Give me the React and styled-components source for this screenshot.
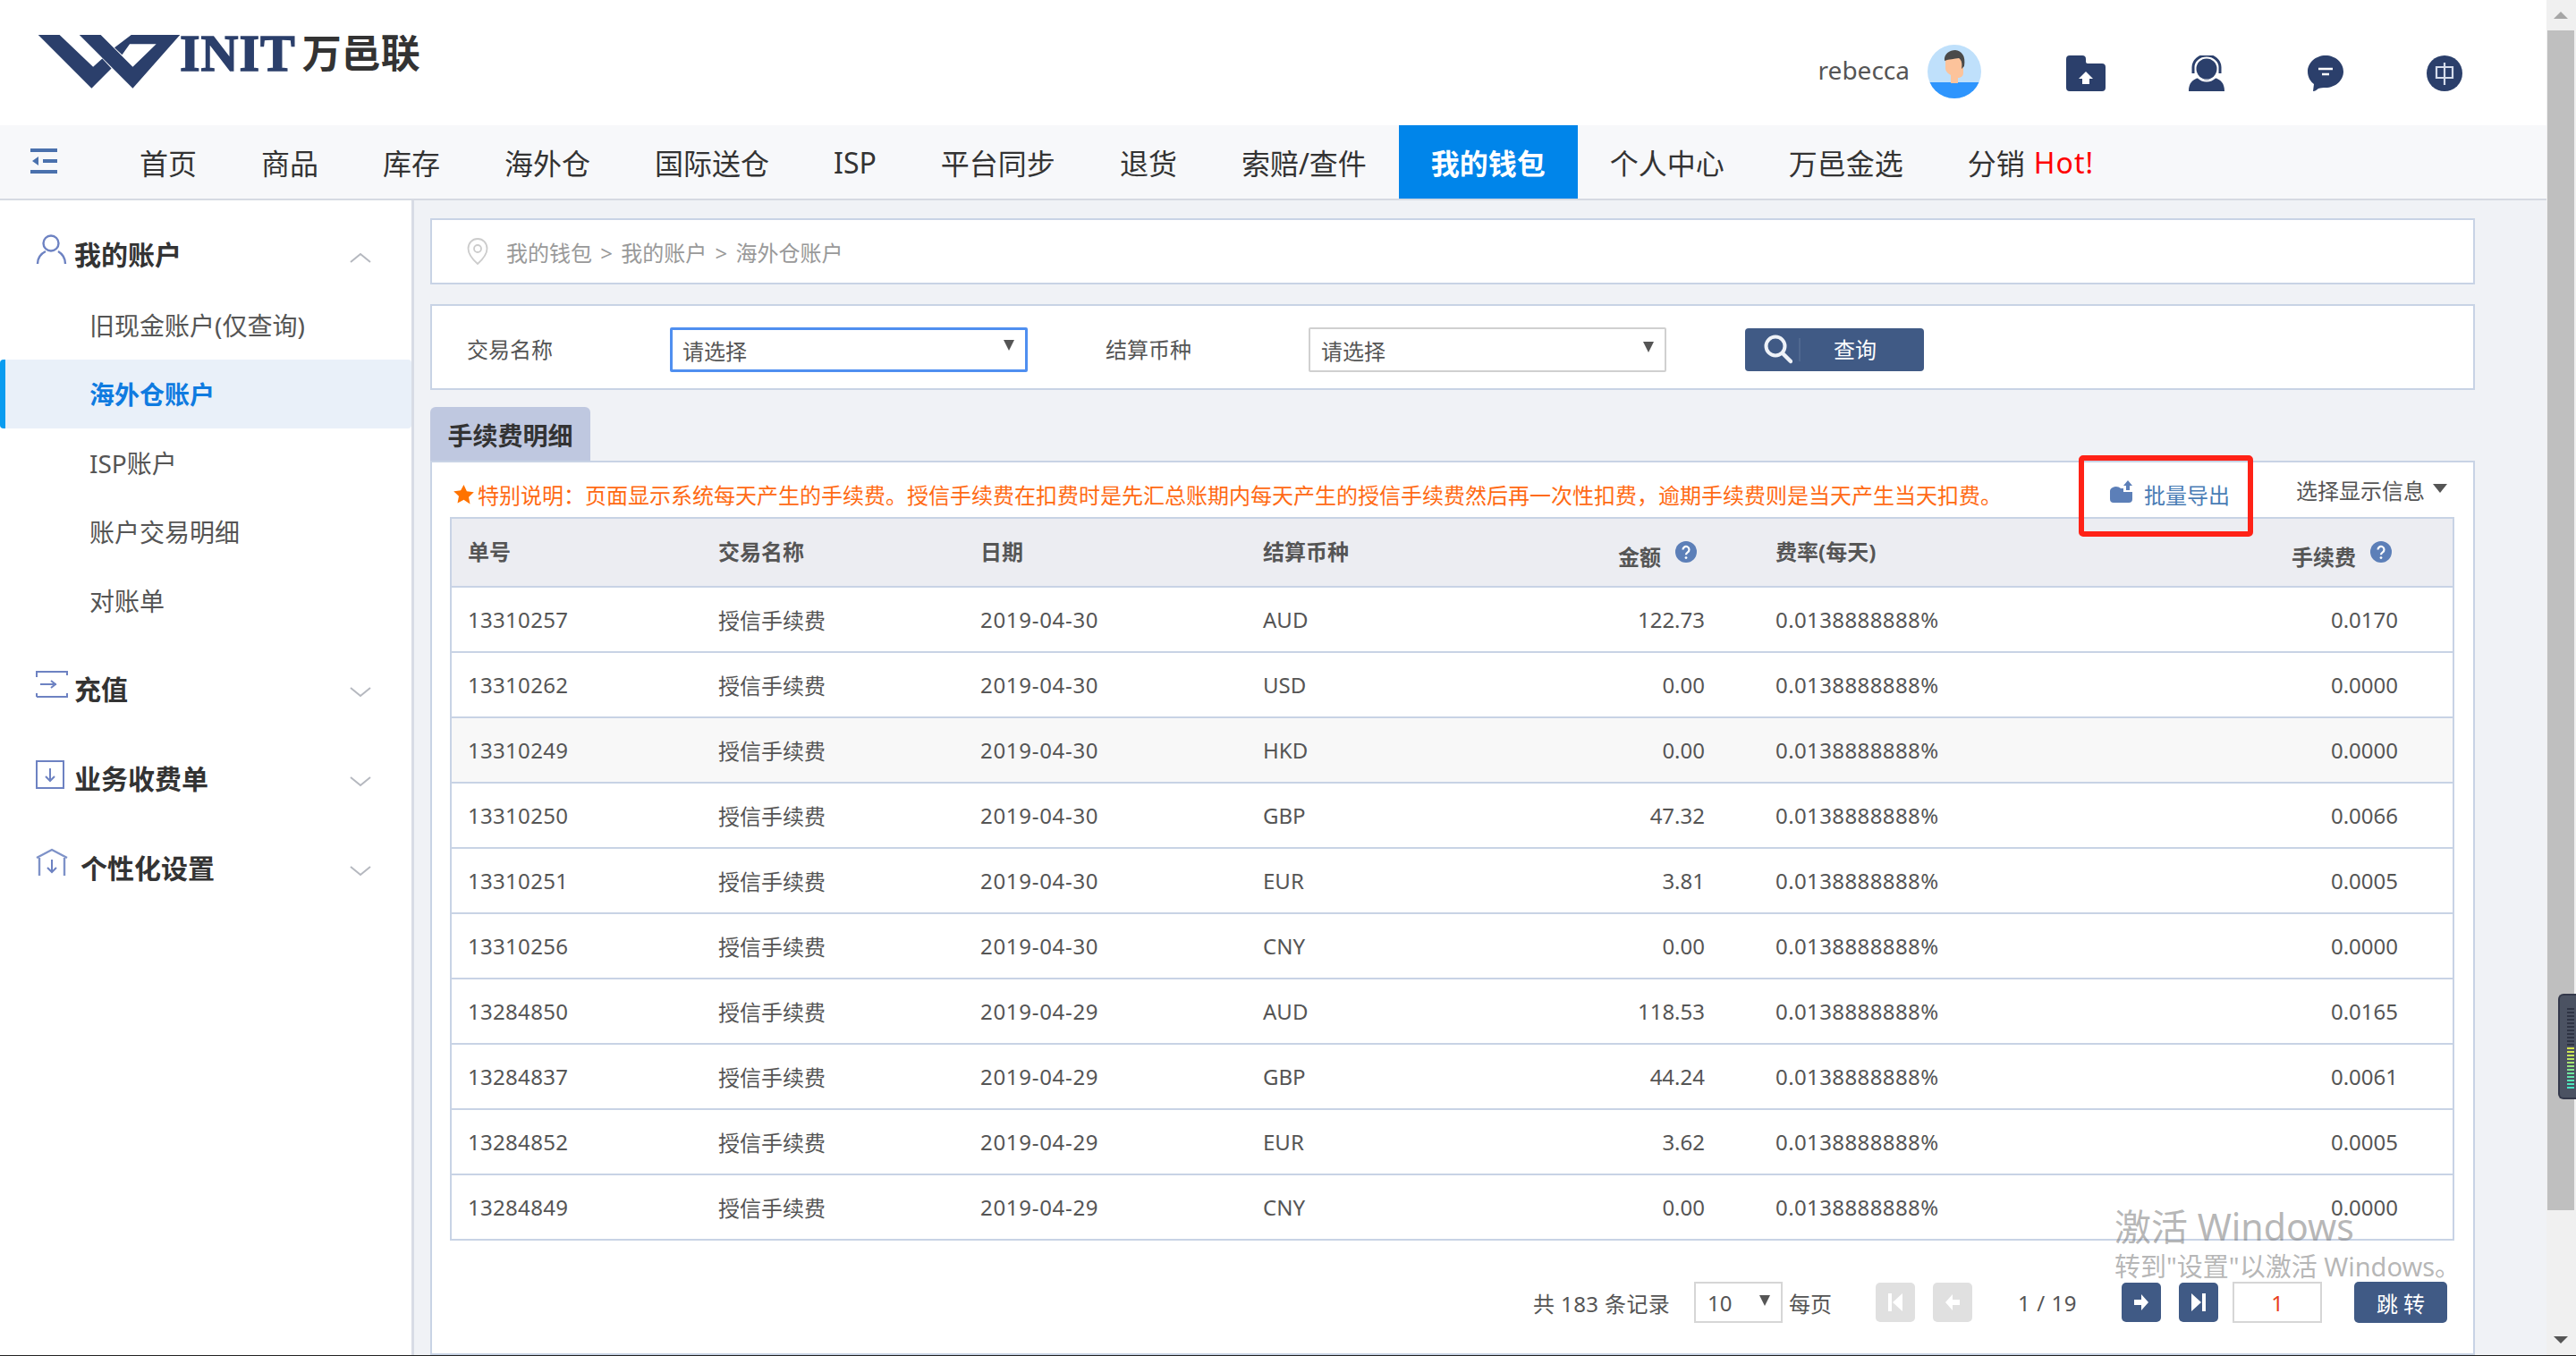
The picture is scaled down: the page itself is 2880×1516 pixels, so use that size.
import styled, { createGlobalStyle } from "styled-components";

const GlobalStyle = createGlobalStyle`
  * {
    box-sizing: border-box;
  }
  html, body {
    margin: 0;
    padding: 0;
    overflow: hidden;
    background: #fff;
    font-family: "Noto Sans", "Noto Sans CJK SC", sans-serif;
    color: #555;
  }
`;

const navy = "#2b3f6b";
const line = "#c8d3e5";

const Shell = styled.div`
  position: relative;
  display: flex;
  width: 2880px;
  height: 1516px;
  overflow: hidden;
  border-bottom: 1px solid #222;
`;

const Page = styled.div`
  flex: 1;
  min-width: 0;
  display: flex;
  flex-direction: column;
`;

/* header */
const Header = styled.header`
  height: 140px;
  display: flex;
  align-items: center;
  justify-content: space-between;
  padding: 0 94px 0 42px;
  background: #fff;
`;

const Logo = styled.div`
  display: flex;
  align-items: flex-start;
  height: 60px;
  margin-top: -2px;
`;

const LogoLatin = styled.span`
  font-family: "Liberation Serif", serif;
  font-weight: 700;
  font-size: 58px;
  line-height: 42px;
  letter-spacing: 1px;
  color: ${navy};
  -webkit-text-stroke: 1.4px ${navy};
  margin-left: -1px;
`;

const LogoCjk = styled.span`
  font-family: "Noto Sans CJK SC", sans-serif;
  font-weight: 700;
  font-size: 44px;
  line-height: 36px;
  color: #333;
  margin-left: 7px;
`;

const UserArea = styled.div`
  display: flex;
  align-items: center;
`;

const UserName = styled.span`
  font-size: 28px;
  color: #555;
  margin-right: 20px;
  margin-top: 16px;
`;

const Avatar = styled.svg`
  width: 60px;
  height: 60px;
  margin-top: 20px;
  margin-right: 95px;
`;

const TopIcons = styled.div`
  display: flex;
  align-items: center;
  gap: 93px;
  margin-top: 24px;
`;

const TopIcon = styled.svg`
  display: block;
  height: 40px;
  width: ${({ $w }) => $w || 40}px;
`;

/* nav */
const Nav = styled.nav`
  height: 84px;
  display: flex;
  padding-left: 34px;
  background: #f7f8fa;
  border-bottom: 2px solid #d6dae2;
`;

const MenuToggle = styled.svg`
  width: 30px;
  height: 28px;
  margin: 26px 56px 0 0;
`;

const NavItem = styled.a`
  height: 82px;
  padding: 0 36px;
  display: flex;
  align-items: center;
  font-size: 32px;
  white-space: nowrap;
  color: ${({ $active }) => ($active ? "#fff" : "#333")};
  background: ${({ $active }) => ($active ? "#0085ea" : "transparent")};
  font-weight: ${({ $active }) => ($active ? 700 : 400)};
`;

const Hot = styled.span`
  color: #f00;
  margin-left: 10px;
  letter-spacing: 1px;
`;

/* body */
const Body = styled.div`
  flex: 1;
  display: flex;
  min-height: 0;
`;

const Sidebar = styled.aside`
  width: 463px;
  flex-shrink: 0;
  padding-top: 11px;
  background: #fff;
  border-right: 3px solid #d8dce5;
`;

const SideHead = styled.div`
  height: 100px;
  display: flex;
  align-items: center;
  padding: 0 43px 4px 40px;
  font-size: 30px;
  font-weight: 700;
  color: #333;
`;

const SideIcon = styled.svg`
  width: 36px;
  height: 36px;
  flex-shrink: 0;
  margin-right: ${({ $gap }) => $gap || 7}px;
  margin-top: -8px;
`;

const SideLabel = styled.span`
  flex: 1;
`;

const Chevron = styled.svg`
  width: 24px;
  height: 14px;
  margin-top: 10px;
  margin-right: 2px;
`;

const SubList = styled.div`
  margin: -10px 0 11px;
`;

const SubItem = styled.div`
  height: 77px;
  display: flex;
  align-items: center;
  padding-bottom: 2px;
  font-size: 28px;
  color: ${({ $active }) => ($active ? "#0f7be0" : "#555")};
  font-weight: ${({ $active }) => ($active ? 700 : 400)};
  background: ${({ $active }) => ($active ? "#e9f0f9" : "transparent")};
  border-left: ${({ $active }) => ($active ? "6px solid #0a9cf0" : "0")};
  padding-left: ${({ $active }) => ($active ? 94 : 100)}px;
  border-radius: ${({ $active }) => ($active ? "4px" : "0")};
`;

const Main = styled.main`
  flex: 1;
  min-width: 0;
  padding: 20px 80px 0 18px;
  background: #f0f2f6;
`;

const Crumbs = styled.div`
  height: 74px;
  display: flex;
  align-items: center;
  padding-left: 39px;
  background: #fff;
  border: 2px solid ${line};
  font-size: 24px;
  word-spacing: 3px;
  color: #999;
`;

const PinIcon = styled.svg`
  width: 24px;
  height: 30px;
  margin-right: 20px;
`;

const Filter = styled.div`
  height: 96px;
  margin-top: 22px;
  display: flex;
  align-items: center;
  padding: 6px 0 0 40px;
  background: #fff;
  border: 2px solid ${line};
`;

const FilterLabel = styled.label`
  width: 226px;
  flex-shrink: 0;
  font-size: 24px;
  color: #555;
  margin-top: -4px;
  margin-left: -1px;
  margin-right: 1px;
`;

const Select = styled.div`
  position: relative;
  width: 400px;
  height: 50px;
  display: flex;
  align-items: center;
  padding-left: ${({ $focus }) => ($focus ? 11 : 12)}px;
  margin-right: 88px;
  font-size: 24px;
  color: #555;
  border: ${({ $focus }) => ($focus ? "3px solid #4f8ff0" : "2px solid #d0d0d0")};
  border-radius: 2px;
`;

const Caret = styled.i`
  position: absolute;
  right: ${({ $right }) => $right ?? 12}px;
  top: ${({ $top }) => $top ?? 13}px;
  width: 0;
  height: 0;
  border-left: ${({ $wide }) => $wide || 6}px solid transparent;
  border-right: ${({ $wide }) => $wide || 6}px solid transparent;
  border-top: ${({ $tall }) => $tall || 12}px solid #555;
`;

const QueryButton = styled.button`
  width: 200px;
  height: 48px;
  display: flex;
  align-items: center;
  padding: 0 0 0 21px;
  border: 0;
  border-radius: 4px;
  background: #405a85;
  color: #fff;
  font: inherit;
  font-size: 24px;
`;

const SearchIcon = styled.svg`
  width: 32px;
  height: 34px;
  flex-shrink: 0;
`;

const QueryText = styled.span`
  margin-left: 7px;
  padding-left: 37px;
  border-left: 2px solid #4f6890;
  line-height: 26px;
`;

const Tab = styled.div`
  width: 179px;
  height: 60px;
  margin-top: 19px;
  display: flex;
  align-items: center;
  justify-content: center;
  padding-top: 2px;
  background: #bfc8e0;
  border-radius: 6px 6px 0 0;
  font-size: 28px;
  font-weight: 700;
  color: #333;
`;

const Panel = styled.section`
  position: relative;
  height: 1000px;
  padding: 0 19px 0 20px;
  background: #fff;
  border: 2px solid ${line};
`;

const Callout = styled.div`
  position: absolute;
  left: 1841px;
  top: -8px;
  width: 195px;
  height: 91px;
  border: 6px solid #ff2217;
  border-radius: 5px;
  pointer-events: none;
`;

const NoteRow = styled.div`
  height: 61px;
  display: flex;
  align-items: center;
  padding-top: 10px;
`;

const Note = styled.div`
  display: flex;
  align-items: center;
  font-size: 24px;
  color: #ff6a13;
  white-space: nowrap;
  margin-left: 3px;
  width: 1852px;
`;

const StarIcon = styled.svg`
  width: 25px;
  height: 24px;
  margin-right: 3px;
`;

const ExportLink = styled.a`
  display: flex;
  align-items: center;
  font-size: 24px;
  color: #4a7db5;
  width: 209px;
`;

const ExportIcon = styled.svg`
  width: 28px;
  height: 26px;
  margin-right: 11px;
  margin-top: -6px;
`;

const ColumnPicker = styled.a`
  position: relative;
  font-size: 24px;
  color: #555;
  margin-top: -10px;
  padding-right: 25px;
  white-space: nowrap;
`;

const Table = styled.table`
  width: 2241px;
  table-layout: fixed;
  border-collapse: separate;
  border-spacing: 0;
  border: 2px solid ${line};
  border-bottom: 0;
  font-size: 24px;
`;

const Th = styled.th`
  width: ${({ $w }) => $w}px;
  height: 77px;
  padding: ${({ $right, $pl }) => ($right ? "8px 68px 0 0" : `0 0 4px ${$pl}px`)};
  text-align: ${({ $right }) => ($right ? "right" : "left")};
  font-weight: 700;
  color: #555;
  background: #ecedf2;
  border-bottom: 2px solid ${line};
`;

const HelpIcon = styled.svg`
  width: 24px;
  height: 24px;
  margin-left: 16px;
  vertical-align: 3px;
`;

const Td = styled.td`
  height: 73px;
  padding: 0 ${({ $right }) => $right || 0}px 0 ${({ $pl }) => $pl || 0}px;
  text-align: ${({ $right }) => ($right ? "right" : "left")};
  letter-spacing: ${({ $ls }) => $ls || 0}px;
  color: #555;
  border-bottom: 2px solid ${line};
  background: ${({ $shade }) => ($shade ? "#f8f8f8" : "#fff")};
`;

const Pager = styled.div`
  margin-top: 46px;
  height: 46px;
  display: flex;
  align-items: center;
  padding-left: 1211px;
  font-size: 24px;
  color: #555;
  white-space: nowrap;
`;

const PagerTotal = styled.span`
  width: 155px;
  letter-spacing: 0.4px;
`;

const PageSize = styled.div`
  position: relative;
  width: 99px;
  height: 46px;
  margin: 0 7px 0 25px;
  display: flex;
  align-items: center;
  padding-left: 13px;
  border: 2px solid #d6d6d6;
`;

const PageBtn = styled.button`
  width: 44px;
  height: 44px;
  margin-left: ${({ $ml }) => $ml || 0}px;
  padding: 0;
  border: 0;
  border-radius: 5px;
  display: flex;
  align-items: center;
  justify-content: center;
  background: ${({ $off }) => ($off ? "#e0e0e0" : "#405a85")};
`;

const PageInfo = styled.span`
  width: 66px;
  margin: 0 50px 0 51px;
  text-align: center;
  letter-spacing: 0.6px;
`;

const PageInput = styled.div`
  width: 100px;
  height: 46px;
  margin-left: 16px;
  display: flex;
  align-items: center;
  justify-content: center;
  color: #e8401c;
  border: 2px solid #d6d6d6;
`;

const JumpButton = styled.button`
  width: 104px;
  height: 46px;
  margin-left: 36px;
  padding: 0;
  border: 0;
  border-radius: 5px;
  background: #405a85;
  color: #fff;
  font: inherit;
  font-size: 24px;
`;

const Watermark = styled.div`
  position: absolute;
  left: 2364px;
  top: 1345px;
  color: rgba(120, 120, 120, 0.55);
  pointer-events: none;
  white-space: nowrap;
`;

const WatermarkTitle = styled.div`
  font-size: 41px;
  line-height: 52px;
`;

const WatermarkSub = styled.div`
  font-size: 29px;
  line-height: 38px;
`;

/* fake browser scrollbar */
const ScrollBar = styled.div`
  position: relative;
  width: 33px;
  flex-shrink: 0;
  display: flex;
  flex-direction: column;
  align-items: center;
  padding: 0 2px 0 1px;
  background: #f0f0f0;
`;

const ScrollArrow = styled.i`
  height: 34px;
  display: flex;
  align-items: center;
  flex-shrink: 0;
  &::before {
    content: "";
    border-left: 8px solid transparent;
    border-right: 8px solid transparent;
    ${({ $down }) =>
      $down ? "border-top: 8px solid #555;" : "border-bottom: 8px solid #a6a6a6;"}
  }
`;

const ScrollThumb = styled.div`
  width: 30px;
  height: 1319px;
  flex-shrink: 0;
  background: #bfbfbf;
`;

const ScrollGap = styled.div`
  flex: 1;
`;

const MeterWidget = styled.div`
  position: absolute;
  left: 13px;
  top: 1111px;
  width: 20px;
  height: 118px;
  padding: 14px 0 0 8px;
  display: flex;
  flex-direction: column;
  gap: 2px;
  background: #4b5262;
  border: 2px solid #33384a;
  border-right: 0;
  border-radius: 6px 0 0 6px;
`;

const MeterBar = styled.b`
  display: block;
  flex-shrink: 0;
  width: 8px;
  height: 2px;
  background: ${({ $c }) => $c};
`;

const navItems = ["首页", "商品", "库存", "海外仓", "国际送仓", "ISP", "平台同步", "退货", "索赔/查件", "我的钱包", "个人中心", "万邑金选"];

const rows = [
  ["13310257", "2019-04-30", "AUD", "122.73", "0.0170"],
  ["13310262", "2019-04-30", "USD", "0.00", "0.0000"],
  ["13310249", "2019-04-30", "HKD", "0.00", "0.0000"],
  ["13310250", "2019-04-30", "GBP", "47.32", "0.0066"],
  ["13310251", "2019-04-30", "EUR", "3.81", "0.0005"],
  ["13310256", "2019-04-30", "CNY", "0.00", "0.0000"],
  ["13284850", "2019-04-29", "AUD", "118.53", "0.0165"],
  ["13284837", "2019-04-29", "GBP", "44.24", "0.0061"],
  ["13284852", "2019-04-29", "EUR", "3.62", "0.0005"],
  ["13284849", "2019-04-29", "CNY", "0.00", "0.0000"],
];

const meterColors = [
  ...Array(11).fill("#2f3444"),
  "#d4e34c", "#cfe552", "#c6e65a", "#b8e665", "#a8e670", "#96e680",
  "#84e690", "#72e6a0", "#62e6ac", "#56e6b6", "#4ee6be", "#48e6c4",
];

function HelpMark() {
  return (
    <HelpIcon viewBox="0 0 24 24">
      <circle cx="12" cy="12" r="12" fill="#5c7fb8" />
      <path d="M8.5 9.5a3.5 3.5 0 1 1 5.4 2.9c-1.2.8-1.9 1.3-1.9 2.8" fill="none" stroke="#fff" strokeWidth="2.2" />
      <circle cx="12" cy="18.6" r="1.4" fill="#fff" />
    </HelpIcon>
  );
}

function SideChevron({ up }) {
  return (
    <Chevron viewBox="0 0 24 14">
      <polyline points={up ? "1,12 12,3 23,12" : "1,2 12,11 23,2"} fill="none" stroke="#b5b8bf" strokeWidth="2" />
    </Chevron>
  );
}

export default function App() {
  return (
    <Shell>
      <GlobalStyle />
      <Page>
        <Header>
          <Logo>
            <svg width="160" height="60" viewBox="35 30 465 176">
              <path d="M35 30H105L215 135L245 108L275 140L210 205Z" fill={navy} />
              <path d="M170 30H240L345 135L422 60H335L310 95L285 72L340 30H500L345 205Z" fill={navy} />
            </svg>
            <LogoLatin>INIT</LogoLatin>
            <LogoCjk>万邑联</LogoCjk>
          </Logo>
          <UserArea>
            <UserName>rebecca</UserName>
            <Avatar viewBox="0 0 60 60">
              <defs>
                <clipPath id="avatarClip">
                  <ellipse cx="30" cy="30" rx="30" ry="30" />
                </clipPath>
              </defs>
              <g clipPath="url(#avatarClip)">
                <rect width="60" height="60" fill="#bfe0fb" />
                <rect x="0" y="42" width="60" height="18" fill="#2e95fd" />
                <path d="M20 14h20v18c0 3-3 5-6 5v6H26v-9c-3-2-6-4-6-8Z" fill="#fcc39b" />
                <path d="M19 18c-1-8 6-12 12-12 7 1 12 6 10 18l-3 3c1-6 0-10-3-12-5 1-11 1-16 3Z" fill="#4a4a4a" />
              </g>
            </Avatar>
            <TopIcons>
              <TopIcon $w={44} viewBox="0 0 44 40">
                <path d="M0 4a4 4 0 0 1 4-4h14a4 4 0 0 1 4 4v3a2 2 0 0 0 2 2h16a4 4 0 0 1 4 4v23a4 4 0 0 1-4 4H4a4 4 0 0 1-4-4Z" fill={navy} />
                <path d="M22 18l-8 8h4v6h8v-6h4Z" fill="#fff" />
              </TopIcon>
              <TopIcon viewBox="0 0 40 40">
                <path d="M0 40c0-9 4-13 11-15 5 3 13 3 18 0 7 2 11 6 11 15Z" fill={navy} />
                <circle cx="20" cy="15" r="11.5" fill={navy} />
                <circle cx="20" cy="15" r="13.5" fill="none" stroke="#fff" strokeWidth="2" />
                <path d="M5 20V13a15 13 0 0 1 30 0v7" fill="none" stroke={navy} strokeWidth="3" />
              </TopIcon>
              <TopIcon viewBox="0 0 40 40">
                <path d="M20 0c11 0 20 8 20 18s-9 18-20 18c-3 0-5 0-8 1-2 1-3 3-6 3l1-8C3 29 0 24 0 18 0 8 9 0 20 0Z" fill={navy} />
                <path d="M12 15h16M16 21h8" stroke="#fff" strokeWidth="2.5" />
              </TopIcon>
              <TopIcon viewBox="0 0 40 40">
                <circle cx="20" cy="20" r="20" fill={navy} />
                <path d="M11 13h18v12H11ZM20 8v25" fill="none" stroke="#d5dceb" strokeWidth="2.2" />
              </TopIcon>
            </TopIcons>
          </UserArea>
        </Header>
        <Nav>
          <MenuToggle viewBox="0 0 30 28">
            <path d="M0 0h30v4H0ZM14 12h16v4H14ZM0 24h30v4H0Z" fill="#4a71ad" />
            <path d="M2 14l7-5v10Z" fill="#4a71ad" />
          </MenuToggle>
          {navItems.map((name) => (
            <NavItem key={name} $active={name === "我的钱包"}>
              {name}
            </NavItem>
          ))}
          <NavItem>
            分销<Hot>Hot!</Hot>
          </NavItem>
        </Nav>
        <Body>
          <Sidebar>
            <SideHead>
              <SideIcon $gap={7} viewBox="0 0 36 36">
                <circle cx="17" cy="11" r="8.5" fill="none" stroke="#6d82c2" strokeWidth="2.4" />
                <path d="M2 34c0-8 5-12 9-14M33 34c0-7-3-11-8-14" fill="none" stroke="#6d82c2" strokeWidth="2.4" />
              </SideIcon>
              <SideLabel>我的账户</SideLabel>
              <SideChevron up />
            </SideHead>
            <SubList>
              <SubItem>旧现金账户(仅查询)</SubItem>
              <SubItem $active>海外仓账户</SubItem>
              <SubItem>ISP账户</SubItem>
              <SubItem>账户交易明细</SubItem>
              <SubItem>对账单</SubItem>
            </SubList>
            <SideHead>
              <SideIcon $gap={7} viewBox="0 0 36 36">
                <path d="M1 8V4h34v4M1 4v6M1 32h34v-4M1 32v-4M5 18h18M17 14l5 4-5 4" fill="none" stroke="#6d82c2" strokeWidth="2" />
              </SideIcon>
              <SideLabel>充值</SideLabel>
              <SideChevron />
            </SideHead>
            <SideHead>
              <SideIcon $gap={7} viewBox="0 0 36 36">
                <path d="M1 4h30v30H1Z" fill="none" stroke="#6d82c2" strokeWidth="2" />
                <path d="M16 12v14M11 21l5 5 5-5" fill="none" stroke="#6d82c2" strokeWidth="2" />
              </SideIcon>
              <SideLabel>业务收费单</SideLabel>
              <SideChevron />
            </SideHead>
            <SideHead>
              <SideIcon $gap={14} viewBox="0 0 36 36">
                <path d="M1 12L18 3l17 9M4 12v20M32 12v20" fill="none" stroke="#7e92c8" strokeWidth="2.4" />
                <path d="M18 14v14M13 23l5 5 5-5" fill="none" stroke="#6d82c2" strokeWidth="2" />
              </SideIcon>
              <SideLabel>个性化设置</SideLabel>
              <SideChevron />
            </SideHead>
          </Sidebar>
          <Main>
            <Crumbs>
              <PinIcon viewBox="0 0 24 30">
                <path d="M12 1C6 1 1.5 5.5 1.5 12c0 7 6 13 10.5 17 4.500-4 10.500-10 10.500-17C22.500 5.500 18 1 12 1Z" fill="none" stroke="#ccc" strokeWidth="1.800" />
                <circle cx="12" cy="12" r="4" fill="none" stroke="#ccc" strokeWidth="1.800" />
              </PinIcon>
              我的钱包 &gt; 我的账户 &gt; 海外仓账户
            </Crumbs>
            <Filter>
              <FilterLabel>交易名称</FilterLabel>
              <Select $focus>
                请选择
                <Caret $top={11} />
              </Select>
              <FilterLabel>结算币种</FilterLabel>
              <Select>
                请选择
                <Caret $top={14} />
              </Select>
              <QueryButton>
                <SearchIcon viewBox="0 0 32 34">
                  <circle cx="13" cy="13" r="10.500" fill="none" stroke="#eef2f8" strokeWidth="4" />
                  <path d="M21 21l9 9" stroke="#eef2f8" strokeWidth="4.500" strokeLinecap="round" />
                </SearchIcon>
                <QueryText>查询</QueryText>
              </QueryButton>
            </Filter>
            <Tab>手续费明细</Tab>
            <Panel>
              <Callout />
              <NoteRow>
                <Note>
                  <StarIcon viewBox="0 0 24 24">
                    <path d="M12 1l3.400 7.300 7.900 1-5.800 5.400 1.500 7.900L12 17.700 5 21.600l1.500-7.900L.700 8.300l7.900-1Z" fill="#ff7300" />
                  </StarIcon>
                  特别说明：页面显示系统每天产生的手续费。授信手续费在扣费时是先汇总账期内每天产生的授信手续费然后再一次性扣费，逾期手续费则是当天产生当天扣费。
                </Note>
                <ExportLink>
                  <ExportIcon viewBox="0 0 28 26">
                    <path d="M4 8c3-2 7-1 9 1h3v4h10v8a4 4 0 0 1-4 4H5a4 4 0 0 1-4-4v-9c0-2 1-3 3-4Z" fill="#5c7fb8" />
                    <path d="M21 0l5 6h-3v5h-4V6h-3Z" fill="#5c7fb8" />
                  </ExportIcon>
                  批量导出
                </ExportLink>
                <ColumnPicker>
                  选择显示信息
                  <Caret $right={0} $top={11} $wide={8} $tall={10} />
                </ColumnPicker>
              </NoteRow>
              <Table>
                <thead>
                  <tr>
                    <Th $w={278} $pl={18}>单号</Th>
                    <Th $w={293} $pl={20}>交易名称</Th>
                    <Th $w={316} $pl={20}>日期</Th>
                    <Th $w={308} $pl={20}>结算币种</Th>
                    <Th $w={265} $right>
                      金额
                      <HelpMark />
                    </Th>
                    <Th $w={335} $pl={20}>费率(每天)</Th>
                    <Th $w={442} $right>
                      手续费
                      <HelpMark />
                    </Th>
                  </tr>
                </thead>
                <tbody>
                  {rows.map((r) => {
                    const shade = r[0] === "13310249";
                    return (
                      <tr key={r[0]}>
                        <Td $shade={shade} $pl={18} $ls={0.3}>{r[0]}</Td>
                        <Td $shade={shade} $pl={20}>授信手续费</Td>
                        <Td $shade={shade} $pl={20} $ls={0.7}>{r[1]}</Td>
                        <Td $shade={shade} $pl={20}>{r[2]}</Td>
                        <Td $shade={shade} $right={59}>{r[3]}</Td>
                        <Td $shade={shade} $pl={20} $ls={0.4}>0.0138888888%</Td>
                        <Td $shade={shade} $right={61}>{r[4]}</Td>
                      </tr>
                    );
                  })}
                </tbody>
              </Table>
              <Pager>
                <PagerTotal>共 183 条记录</PagerTotal>
                <PageSize>
                  10
                  <Caret $top={13} />
                </PageSize>
                每页
                <PageBtn $off $ml={49}>
                  <svg width="16" height="24" viewBox="0 0 16 24">
                    <path d="M0 2h4v20H0ZM16 2v20L5 12Z" fill="#fff" />
                  </svg>
                </PageBtn>
                <PageBtn $off $ml={20}>
                  <svg width="18" height="20" viewBox="0 0 18 20">
                    <path d="M9 1L1 10l8 9V13h8V7H9Z" fill="#fff" />
                  </svg>
                </PageBtn>
                <PageInfo>1 / 19</PageInfo>
                <PageBtn>
                  <svg width="18" height="20" viewBox="0 0 18 20">
                    <path d="M9 1l8 9-8 9V13H1V7h8Z" fill="#fff" />
                  </svg>
                </PageBtn>
                <PageBtn $ml={20}>
                  <svg width="16" height="24" viewBox="0 0 16 24">
                    <path d="M0 2v20l11-10ZM12 2h4v20h-4Z" fill="#fff" />
                  </svg>
                </PageBtn>
                <PageInput>1</PageInput>
                <JumpButton>跳 转</JumpButton>
              </Pager>
            </Panel>
          </Main>
        </Body>
      </Page>
      <ScrollBar>
        <ScrollArrow />
        <ScrollThumb />
        <ScrollGap />
        <ScrollArrow $down />
        <MeterWidget>
          {meterColors.map((c, i) => (
            <MeterBar key={i} $c={c} />
          ))}
        </MeterWidget>
      </ScrollBar>
      <Watermark>
        <WatermarkTitle>激活 Windows</WatermarkTitle>
        <WatermarkSub>转到"设置"以激活 Windows。</WatermarkSub>
      </Watermark>
    </Shell>
  );
}
